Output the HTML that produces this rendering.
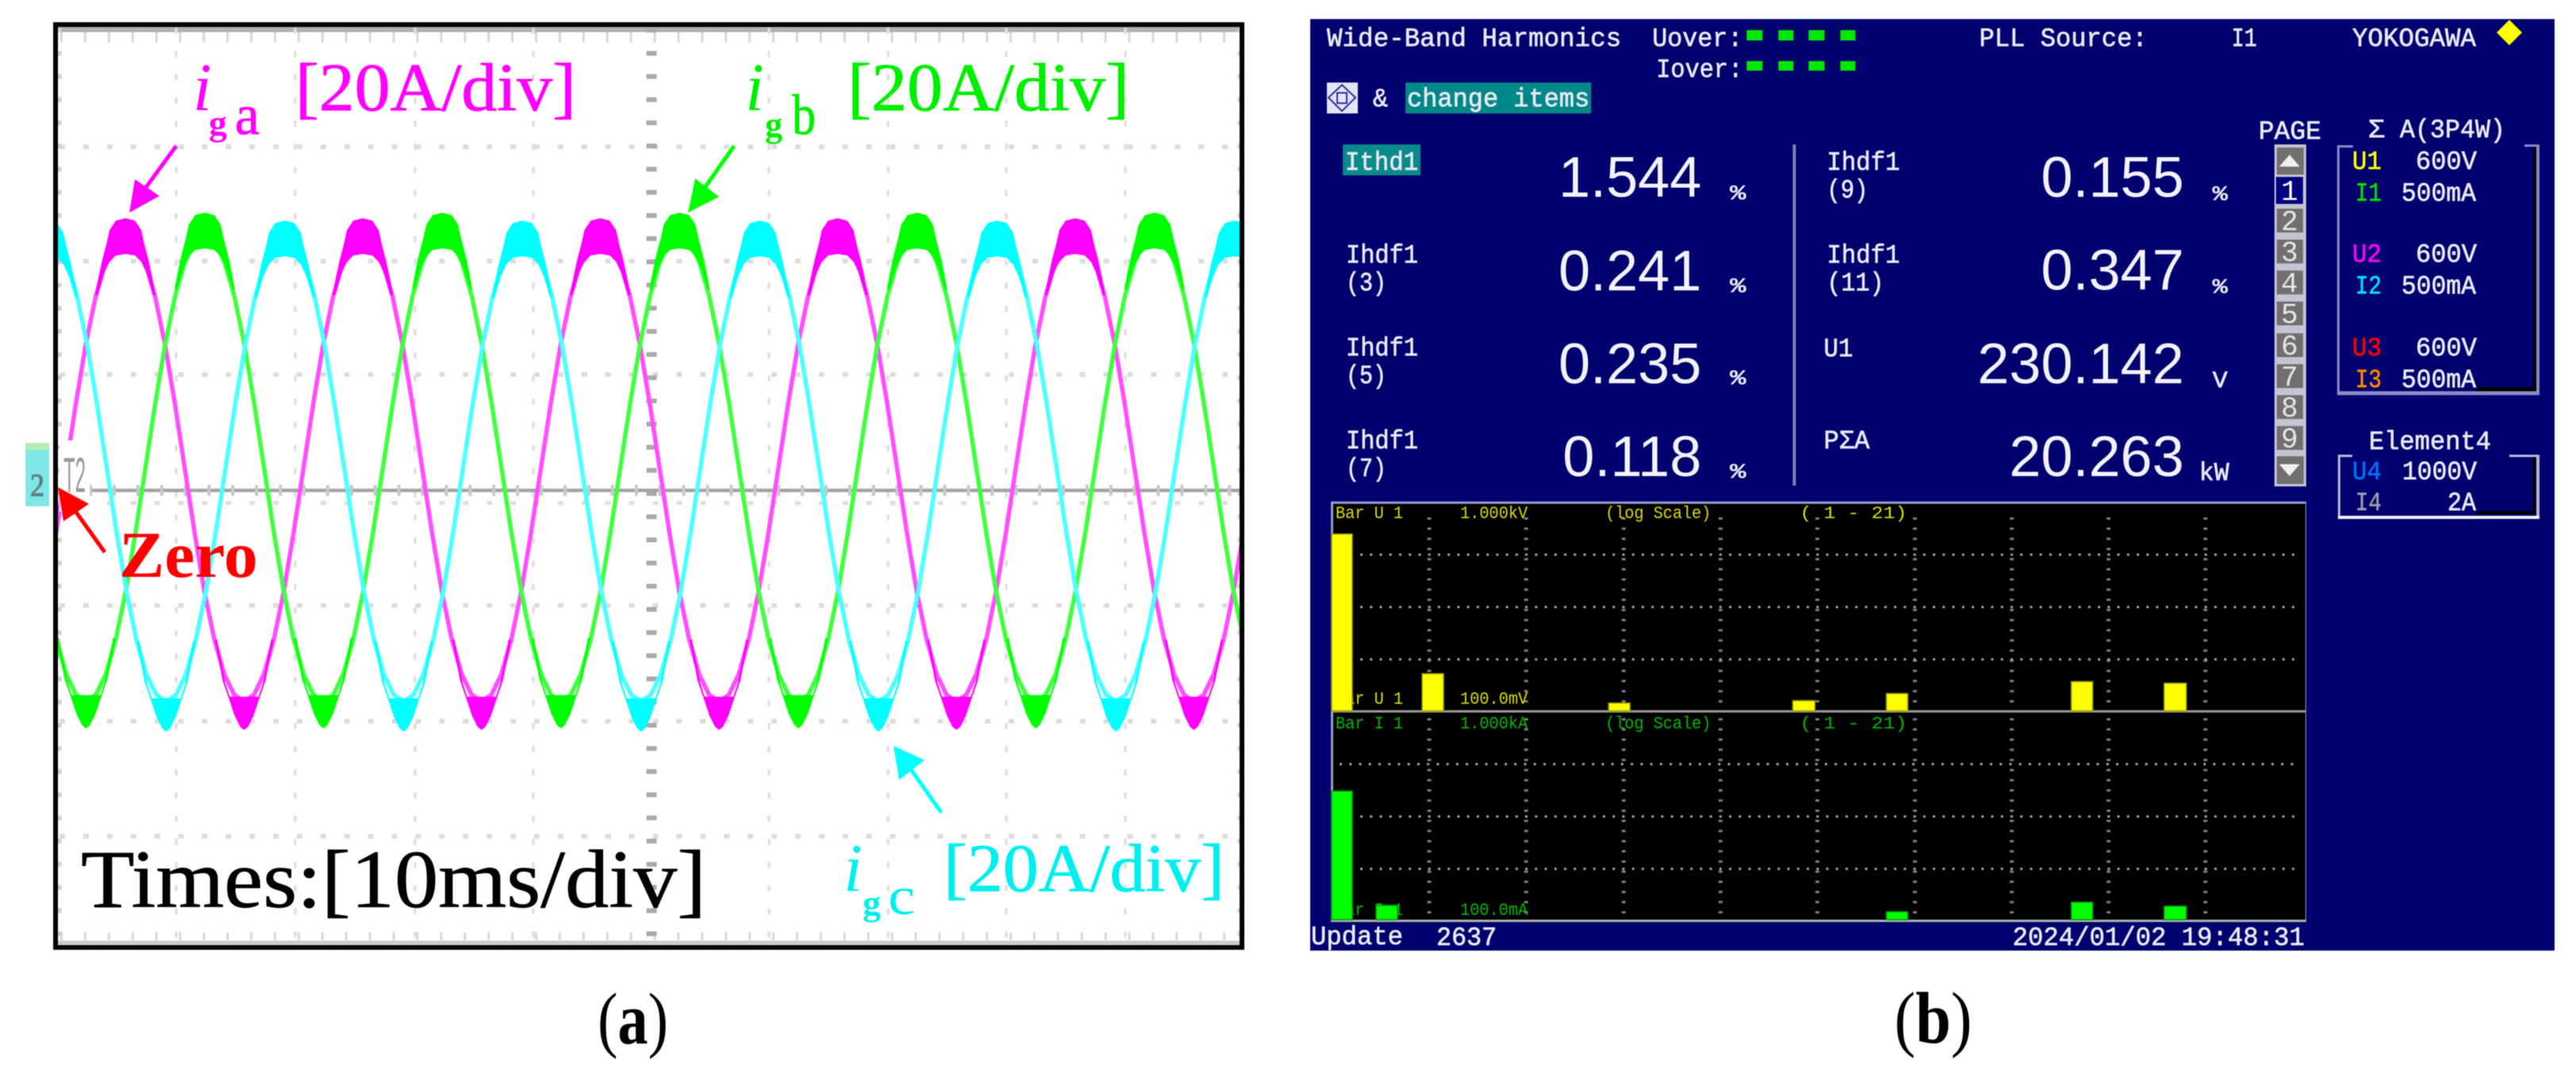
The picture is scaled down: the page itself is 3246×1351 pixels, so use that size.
<!DOCTYPE html>
<html>
<head>
<meta charset="utf-8">
<title>Waveform and harmonics</title>
<style>
html,body{margin:0;padding:0;background:#fff;}
svg{display:block;filter:blur(.6px);}
.s{font-family:"Liberation Serif",serif;}
.m{font-family:"Liberation Mono",monospace;fill:#e8e8f2;font-size:33px;stroke:#e8e8f2;stroke-width:.7px;}
.b{font-family:"Liberation Sans",sans-serif;fill:#f2f2f8;font-size:72px;text-anchor:end;}
.t{font-family:"Liberation Mono",monospace;font-size:22px;}
</style>
</head>
<body>
<svg xmlns="http://www.w3.org/2000/svg" width="3246" height="1351" viewBox="0 0 3246 1351">
<defs>
<polyline id="w" fill="none" stroke-linejoin="round" points="-149.6,884 -137.1,875.5 -124.7,849.8 -112.2,806.4 -99.7,746 -87.3,671.9 -74.8,590 -62.3,508.1 -49.9,434 -37.4,373.6 -24.9,330.2 -12.5,304.5 0,296 12.5,304.5 24.9,330.2 37.4,373.6 49.9,434 62.3,508.1 74.8,590 87.3,671.9 99.7,746 112.2,806.4 124.7,849.8 137.1,875.5 149.6,884"/>
<polygon id="up" points="-38,97 -34,75 -29,52 -24,33 -20,15 -12,3 0,0 12,3 20,15 24,33 29,52 34,75 38,97 35,97 27,70 20,55 12,47 0,45 -12,47 -20,55 -27,70 -35,97"/>
<polygon id="dn" points="-37,-114 -27,-62 -20,-42 -12,-18 -5,-4 0,0 5,-4 12,-18 20,-42 27,-62 37,-114 34,-114 24,-60 18,-42 -18,-42 -24,-60 -34,-114"/>
<clipPath id="plot"><rect x="73" y="33" width="1489" height="1158"/></clipPath>
</defs>

<rect width="3246" height="1351" fill="#fff"/>

<!-- PANEL A: grid -->
<g fill="none">
<line x1="73" y1="37" x2="1562" y2="37" stroke="#b0b0b0" stroke-width="7"/>
<line x1="76" y1="47" x2="1562" y2="47" stroke="#d8d8d8" stroke-width="13" stroke-dasharray="3 26.9"/>
<line x1="73" y1="1188" x2="1562" y2="1188" stroke="#ccc" stroke-width="5"/>
<line x1="76" y1="1180" x2="1562" y2="1180" stroke="#d8d8d8" stroke-width="10" stroke-dasharray="3 26.9"/>
<g stroke="#dcdcdc" stroke-width="6" stroke-dasharray="7 22.9">
<line x1="75" y1="185" x2="1562" y2="185"/>
<line x1="75" y1="329" x2="1562" y2="329"/>
<line x1="75" y1="472" x2="1562" y2="472"/>
<line x1="75" y1="763" x2="1562" y2="763"/>
<line x1="75" y1="909" x2="1562" y2="909"/>
<line x1="75" y1="1054" x2="1562" y2="1054"/>
</g>
<line x1="75" y1="634" x2="1562" y2="634" stroke="#dedede" stroke-width="5" stroke-dasharray="7 22.9"/>
<g stroke="#e0e0e0" stroke-width="3.5" stroke-dasharray="8 21.2">
<line x1="222" y1="35" x2="222" y2="1190"/>
<line x1="372" y1="35" x2="372" y2="1190"/>
<line x1="523" y1="35" x2="523" y2="1190"/>
<line x1="672" y1="35" x2="672" y2="1190"/>
<line x1="969" y1="35" x2="969" y2="1190"/>
<line x1="1119" y1="35" x2="1119" y2="1190"/>
<line x1="1268" y1="35" x2="1268" y2="1190"/>
<line x1="1418" y1="35" x2="1418" y2="1190"/>
</g>
<line x1="75" y1="35" x2="75" y2="1190" stroke="#d0d0d0" stroke-width="5" stroke-dasharray="6 23.2"/>
<line x1="1562" y1="35" x2="1562" y2="1190" stroke="#d0d0d0" stroke-width="5" stroke-dasharray="6 23.2"/>
<line x1="821" y1="35" x2="821" y2="1190" stroke="#aaa" stroke-width="13" stroke-dasharray="6 23.2"/>
<line x1="112" y1="618" x2="1562" y2="618" stroke="#a4a4a4" stroke-width="4.5"/>
<line x1="112" y1="618" x2="1562" y2="618" stroke="#c8c8c8" stroke-width="14" stroke-dasharray="4 25.9"/>
</g>

<!-- PANEL A: waves -->
<g clip-path="url(#plot)">
<g stroke="#ff4dff" stroke-width="5.5" fill="none">
<use href="#w" x="158"/><use href="#w" x="457.2"/><use href="#w" x="756.4"/><use href="#w" x="1055.6"/><use href="#w" x="1354.8"/><use href="#w" x="1654"/>
</g>
<g fill="#ff00ff">
<use href="#up" x="158" y="275"/><use href="#up" x="457.2" y="275"/><use href="#up" x="756.4" y="275"/><use href="#up" x="1055.6" y="275"/><use href="#up" x="1354.8" y="275"/>
<use href="#dn" x="307.6" y="920"/><use href="#dn" x="606.8" y="920"/><use href="#dn" x="906" y="920"/><use href="#dn" x="1205.2" y="920"/><use href="#dn" x="1504.4" y="920"/>
</g>
<rect x="75" y="555" width="38" height="90" fill="#fff"/>
<g stroke="#40ff40" stroke-width="5.5" fill="none">
<use href="#w" x="-41.2"/><use href="#w" x="258"/><use href="#w" x="557.2"/><use href="#w" x="856.4"/><use href="#w" x="1155.6"/><use href="#w" x="1454.8"/>
</g>
<g fill="#00ff00">
<use href="#up" x="258" y="268"/><use href="#up" x="557.2" y="268"/><use href="#up" x="856.4" y="268"/><use href="#up" x="1155.6" y="268"/><use href="#up" x="1454.8" y="268"/>
<use href="#dn" x="108.4" y="918"/><use href="#dn" x="407.6" y="918"/><use href="#dn" x="706.8" y="918"/><use href="#dn" x="1006" y="918"/><use href="#dn" x="1305.2" y="918"/>
</g>
<g stroke="#4dffff" stroke-width="5.5" fill="none">
<use href="#w" x="59.8"/><use href="#w" x="359"/><use href="#w" x="658.2"/><use href="#w" x="957.4"/><use href="#w" x="1256.6"/><use href="#w" x="1555.8"/>
</g>
<g fill="#00ffff">
<use href="#up" x="59.8" y="278"/><use href="#up" x="359" y="278"/><use href="#up" x="658.2" y="278"/><use href="#up" x="957.4" y="278"/><use href="#up" x="1256.6" y="278"/><use href="#up" x="1555.8" y="278"/>
<use href="#dn" x="209.4" y="922"/><use href="#dn" x="508.6" y="922"/><use href="#dn" x="807.8" y="922"/><use href="#dn" x="1107" y="922"/><use href="#dn" x="1406.2" y="922"/>
</g>
</g>

<!-- Left marker -->
<rect x="32" y="558" width="30" height="80" fill="#7fe6e6"/>
<rect x="32" y="558" width="30" height="9" fill="#b4eeb4"/>
<text class="s" x="38" y="625" font-size="40" fill="#5f7f7f" stroke="#5f7f7f" stroke-width="1" textLength="18" lengthAdjust="spacingAndGlyphs">2</text>
<text x="80" y="620" font-family="Liberation Sans, sans-serif" font-size="62" fill="#999" textLength="28" lengthAdjust="spacingAndGlyphs">T2</text>

<!-- Frame -->
<g fill="#000">
<rect x="67" y="28" width="1501" height="6"/>
<rect x="67" y="1191" width="1501" height="6"/>
<rect x="67" y="28" width="6" height="1169"/>
<rect x="1562" y="28" width="6" height="1169"/>
</g>

<!-- Arrows -->
<g stroke-width="5" fill="none">
<line x1="222" y1="184" x2="181" y2="240" stroke="#ff00ff"/>
<line x1="925" y1="184" x2="887" y2="238" stroke="#00ff00"/>
<line x1="1186" y1="1024" x2="1146" y2="967" stroke="#00ffff"/>
<line x1="132" y1="696" x2="92" y2="640" stroke="#ff0000"/>
</g>
<polygon points="163,268 170,226 201,247" fill="#ff00ff"/>
<polygon points="867,268 876,225 906,248" fill="#00ff00"/>
<polygon points="1126,940 1165,958 1133,983" fill="#00ffff"/>
<polygon points="73,614 112,635 80,657" fill="#ff0000"/>

<!-- Panel A labels -->
<g class="s">
<text x="243" y="139" font-size="86" font-style="italic" fill="#ff00ff">i</text>
<text x="263" y="170" font-size="44" font-weight="bold" fill="#ff00ff" textLength="23" lengthAdjust="spacingAndGlyphs">g</text>
<text x="296" y="169" font-size="72" fill="#ff00ff" stroke="#ff00ff" stroke-width=".8" textLength="31" lengthAdjust="spacingAndGlyphs">a</text>
<text x="372" y="139" font-size="86" fill="#ff00ff" stroke="#ff00ff" stroke-width=".8" textLength="354" lengthAdjust="spacingAndGlyphs">[20A/div]</text>

<text x="939" y="139" font-size="86" font-style="italic" fill="#00ee00">i</text>
<text x="964" y="172" font-size="44" font-weight="bold" fill="#00ee00" textLength="22" lengthAdjust="spacingAndGlyphs">g</text>
<text x="998" y="169" font-size="72" fill="#00ee00" stroke="#00ee00" stroke-width=".8" textLength="30" lengthAdjust="spacingAndGlyphs">b</text>
<text x="1068" y="139" font-size="86" fill="#00ee00" stroke="#00ee00" stroke-width=".8" textLength="355" lengthAdjust="spacingAndGlyphs">[20A/div]</text>

<text x="1063" y="1123" font-size="86" font-style="italic" fill="#00eeee">i</text>
<text x="1087" y="1153" font-size="44" font-weight="bold" fill="#00eeee" textLength="23" lengthAdjust="spacingAndGlyphs">g</text>
<text x="1119" y="1152" font-size="68" fill="#00eeee" textLength="34" lengthAdjust="spacingAndGlyphs">c</text>
<text x="1189" y="1123" font-size="86" fill="#00eeee" stroke="#00eeee" stroke-width=".8" textLength="354" lengthAdjust="spacingAndGlyphs">[20A/div]</text>

<text x="102" y="1143" font-size="104" fill="#000" stroke="#000" stroke-width=".7" textLength="788" lengthAdjust="spacingAndGlyphs">Times:[10ms/div]</text>
<text x="150" y="727" font-size="83" font-weight="bold" fill="#ff0000" textLength="175" lengthAdjust="spacingAndGlyphs">Zero</text>

<text x="753" y="1315" font-size="92" fill="#000" textLength="89" lengthAdjust="spacingAndGlyphs">(<tspan font-weight="bold">a</tspan>)</text>
<text x="2387" y="1314" font-size="92" fill="#000" textLength="98" lengthAdjust="spacingAndGlyphs">(<tspan font-weight="bold">b</tspan>)</text>
</g>

<!-- PANEL B -->
<rect x="1651" y="24" width="1568" height="1174" fill="#00006e"/>

<text class="m" x="1672" y="58" textLength="371" lengthAdjust="spacingAndGlyphs">Wide-Band Harmonics</text>
<text class="m" x="2082" y="58" textLength="114" lengthAdjust="spacingAndGlyphs">Uover:</text>
<text class="m" x="2087" y="97" textLength="109" lengthAdjust="spacingAndGlyphs">Iover:</text>
<g fill="#00e800">
<rect x="2201" y="38" width="20" height="13"/><rect x="2241" y="38" width="19" height="13"/><rect x="2279" y="38" width="20" height="13"/><rect x="2319" y="38" width="19" height="13"/>
<rect x="2201" y="77" width="20" height="12"/><rect x="2241" y="77" width="19" height="12"/><rect x="2279" y="77" width="20" height="12"/><rect x="2319" y="77" width="19" height="12"/>
</g>
<text class="m" x="2494" y="58" textLength="212" lengthAdjust="spacingAndGlyphs">PLL Source:</text>
<text class="m" x="2812" y="58" textLength="32" lengthAdjust="spacingAndGlyphs">I1</text>
<text class="m" x="2964" y="58" textLength="156" lengthAdjust="spacingAndGlyphs">YOKOGAWA</text>
<polygon points="3162,25 3178,41 3162,57 3146,41" fill="#ffff00"/>

<rect x="1672" y="104" width="39" height="39" fill="#e4e4f4"/>
<polygon points="1691,107 1708,123 1691,140 1674,123" fill="none" stroke="#30309a" stroke-width="2"/>
<rect x="1685" y="117" width="12" height="13" fill="none" stroke="#30309a" stroke-width="2"/>
<text class="m" x="1730" y="134" textLength="19" lengthAdjust="spacingAndGlyphs">&amp;</text>
<rect x="1771" y="104" width="234" height="39" fill="#008888"/>
<text class="m" x="1773" y="134" textLength="230" lengthAdjust="spacingAndGlyphs">change items</text>

<rect x="1692" y="182" width="98" height="39" fill="#0a8a8a"/>
<text class="m" x="1695" y="214" textLength="92" lengthAdjust="spacingAndGlyphs">Ithd1</text>
<text class="m" x="1696" y="331" textLength="91" lengthAdjust="spacingAndGlyphs">Ihdf1</text>
<text class="m" x="1696" y="366" textLength="51" lengthAdjust="spacingAndGlyphs">(3)</text>
<text class="m" x="1696" y="448" textLength="91" lengthAdjust="spacingAndGlyphs">Ihdf1</text>
<text class="m" x="1696" y="483" textLength="51" lengthAdjust="spacingAndGlyphs">(5)</text>
<text class="m" x="1696" y="565" textLength="91" lengthAdjust="spacingAndGlyphs">Ihdf1</text>
<text class="m" x="1696" y="600" textLength="51" lengthAdjust="spacingAndGlyphs">(7)</text>

<text class="b" x="2144" y="248">1.544</text>
<text class="b" x="2144" y="366">0.241</text>
<text class="b" x="2144" y="483">0.235</text>
<text class="b" x="2144" y="600">0.118</text>

<g class="m">
<text x="2180" y="251" font-size="26" textLength="20" lengthAdjust="spacingAndGlyphs">%</text>
<text x="2180" y="368" font-size="26" textLength="20" lengthAdjust="spacingAndGlyphs">%</text>
<text x="2180" y="484" font-size="26" textLength="20" lengthAdjust="spacingAndGlyphs">%</text>
<text x="2180" y="602" font-size="26" textLength="20" lengthAdjust="spacingAndGlyphs">%</text>
</g>

<rect x="2259" y="182" width="4" height="430" fill="#7f7fb8"/>

<text class="m" x="2302" y="214" textLength="92" lengthAdjust="spacingAndGlyphs">Ihdf1</text>
<text class="m" x="2302" y="249" textLength="52" lengthAdjust="spacingAndGlyphs">(9)</text>
<text class="m" x="2302" y="331" textLength="92" lengthAdjust="spacingAndGlyphs">Ihdf1</text>
<text class="m" x="2302" y="366" textLength="72" lengthAdjust="spacingAndGlyphs">(11)</text>
<text class="m" x="2298" y="449" textLength="37" lengthAdjust="spacingAndGlyphs">U1</text>
<text class="m" x="2298" y="565" textLength="58" lengthAdjust="spacingAndGlyphs">PΣA</text>

<text class="b" x="2752" y="248">0.155</text>
<text class="b" x="2752" y="365">0.347</text>
<text class="b" x="2752" y="483">230.142</text>
<text class="b" x="2752" y="600">20.263</text>

<g class="m">
<text x="2788" y="252" font-size="26" textLength="19" lengthAdjust="spacingAndGlyphs">%</text>
<text x="2788" y="369" font-size="26" textLength="19" lengthAdjust="spacingAndGlyphs">%</text>
<text x="2788" y="488" font-size="30" textLength="19" lengthAdjust="spacingAndGlyphs">V</text>
<text x="2771" y="605" font-size="32" textLength="38" lengthAdjust="spacingAndGlyphs">kW</text>
</g>

<text class="m" x="2846" y="175" textLength="79" lengthAdjust="spacingAndGlyphs">PAGE</text>

<!-- Page scrollbar -->
<rect x="2866" y="182" width="40" height="431" fill="#c4c4d2"/>
<rect x="2869" y="186" width="34" height="34" fill="#707070"/>
<polygon points="2885,195 2898,210 2872,210" fill="#f0f0f0"/>
<rect x="2868" y="223" width="34" height="34" fill="#000080"/>
<g fill="#707070">
<rect x="2869" y="263" width="33" height="30"/>
<rect x="2869" y="302" width="33" height="30"/>
<rect x="2869" y="341" width="33" height="30"/>
<rect x="2869" y="380" width="33" height="30"/>
<rect x="2869" y="420" width="33" height="30"/>
<rect x="2869" y="459" width="33" height="30"/>
<rect x="2869" y="498" width="33" height="30"/>
<rect x="2869" y="537" width="33" height="30"/>
</g>
<rect x="2869" y="575" width="34" height="35" fill="#707070"/>
<polygon points="2872,585 2898,585 2885,600" fill="#f0f0f0"/>
<g font-family="Liberation Mono, monospace" font-size="36" fill="#e6e6e6" text-anchor="middle">
<text x="2885" y="252" fill="#fff">1</text>
<text x="2885" y="290">2</text>
<text x="2885" y="329">3</text>
<text x="2885" y="368">4</text>
<text x="2885" y="407">5</text>
<text x="2885" y="447">6</text>
<text x="2885" y="486">7</text>
<text x="2885" y="525">8</text>
<text x="2885" y="564">9</text>
</g>

<!-- Legend 1 -->
<text class="m" x="2984" y="173" textLength="21" lengthAdjust="spacingAndGlyphs">Σ</text>
<text class="m" x="3024" y="173" textLength="133" lengthAdjust="spacingAndGlyphs">A(3P4W)</text>
<g fill="#8a8ac4">
<rect x="2945" y="183" width="20" height="3"/>
<rect x="2945" y="183" width="3" height="315"/>
<rect x="2945" y="493" width="255" height="5"/>
<rect x="3181" y="182" width="19" height="3"/>
<rect x="3196" y="182" width="4" height="316"/>
</g>
<rect x="3192" y="185" width="4" height="306" fill="#000"/>
<rect x="3121" y="488" width="75" height="5" fill="#000"/>
<g font-family="Liberation Mono, monospace" font-size="33">
<text x="2964" y="213" fill="#ffff00" stroke="#ffff00" stroke-width=".6" textLength="37" lengthAdjust="spacingAndGlyphs">U1</text>
<text x="2968" y="253" fill="#00e000" stroke="#00e000" stroke-width=".6" textLength="33" lengthAdjust="spacingAndGlyphs">I1</text>
<text x="2964" y="330" fill="#ff00ff" stroke="#ff00ff" stroke-width=".6" textLength="37" lengthAdjust="spacingAndGlyphs">U2</text>
<text x="2968" y="370" fill="#00e0ff" stroke="#00e0ff" stroke-width=".6" textLength="33" lengthAdjust="spacingAndGlyphs">I2</text>
<text x="2964" y="448" fill="#ff0000" stroke="#ff0000" stroke-width=".6" textLength="37" lengthAdjust="spacingAndGlyphs">U3</text>
<text x="2968" y="488" fill="#ff8800" stroke="#ff8800" stroke-width=".6" textLength="33" lengthAdjust="spacingAndGlyphs">I3</text>
<text x="2964" y="604" fill="#0070ff" stroke="#0070ff" stroke-width=".6" textLength="37" lengthAdjust="spacingAndGlyphs">U4</text>
<text x="2968" y="643" fill="#9a9aa8" stroke="#9a9aa8" stroke-width=".6" textLength="33" lengthAdjust="spacingAndGlyphs">I4</text>
</g>
<text class="m" x="3044" y="213" textLength="77" lengthAdjust="spacingAndGlyphs">600V</text>
<text class="m" x="3026" y="253" textLength="94" lengthAdjust="spacingAndGlyphs">500mA</text>
<text class="m" x="3044" y="330" textLength="77" lengthAdjust="spacingAndGlyphs">600V</text>
<text class="m" x="3026" y="370" textLength="94" lengthAdjust="spacingAndGlyphs">500mA</text>
<text class="m" x="3044" y="448" textLength="77" lengthAdjust="spacingAndGlyphs">600V</text>
<text class="m" x="3026" y="488" textLength="94" lengthAdjust="spacingAndGlyphs">500mA</text>

<!-- Legend 2 -->
<text class="m" x="2985" y="566" textLength="154" lengthAdjust="spacingAndGlyphs">Element4</text>
<g fill="#b8b8dc">
<rect x="2946" y="573" width="18" height="3"/>
<rect x="2946" y="573" width="3" height="81"/>
<rect x="3162" y="573" width="38" height="3"/>
<rect x="3196" y="573" width="4" height="81"/>
</g>
<rect x="2946" y="650" width="254" height="4" fill="#f0f0f8"/>
<rect x="3192" y="576" width="4" height="72" fill="#000"/>
<rect x="3121" y="644" width="75" height="4" fill="#000"/>
<text class="m" x="3027" y="604" textLength="94" lengthAdjust="spacingAndGlyphs">1000V</text>
<text class="m" x="3084" y="643" textLength="36" lengthAdjust="spacingAndGlyphs">2A</text>

<!-- Charts -->
<rect x="1677" y="632" width="1229" height="530" fill="#9a9ac4"/>
<rect x="1680" y="635" width="1225" height="525" fill="#000"/>
<rect x="1680" y="895" width="1225" height="3" fill="#9a9a9a"/>
<rect x="1677" y="1159" width="1229" height="3" fill="#b0b0b0"/>
<g fill="none" stroke="#7a7a7a">
<g stroke-width="5" stroke-dasharray="3 9.8">
<line x1="1801" y1="652" x2="1801" y2="895"/><line x1="1923" y1="652" x2="1923" y2="895"/><line x1="2046" y1="652" x2="2046" y2="895"/><line x1="2168" y1="652" x2="2168" y2="895"/><line x1="2290" y1="652" x2="2290" y2="895"/><line x1="2413" y1="652" x2="2413" y2="895"/><line x1="2535" y1="652" x2="2535" y2="895"/><line x1="2657" y1="652" x2="2657" y2="895"/><line x1="2779" y1="652" x2="2779" y2="895"/>
<line x1="1801" y1="905" x2="1801" y2="1155"/><line x1="1923" y1="905" x2="1923" y2="1155"/><line x1="2046" y1="905" x2="2046" y2="1155"/><line x1="2168" y1="905" x2="2168" y2="1155"/><line x1="2290" y1="905" x2="2290" y2="1155"/><line x1="2413" y1="905" x2="2413" y2="1155"/><line x1="2535" y1="905" x2="2535" y2="1155"/><line x1="2657" y1="905" x2="2657" y2="1155"/><line x1="2779" y1="905" x2="2779" y2="1155"/>
</g>
<g stroke-width="3" stroke-dasharray="3 9.23" stroke="#a0a0a0">
<line x1="1714" y1="699" x2="2894" y2="699"/><line x1="1714" y1="765" x2="2894" y2="765"/><line x1="1714" y1="831" x2="2894" y2="831"/>
<line x1="1688" y1="963" x2="2894" y2="963"/><line x1="1714" y1="1029" x2="2894" y2="1029"/><line x1="1714" y1="1095" x2="2894" y2="1095"/>
</g>
</g>
<g class="t" fill="#dcdc00">
<text x="1683" y="653" textLength="85" lengthAdjust="spacingAndGlyphs">Bar U 1</text>
<text x="1840" y="653" textLength="85" lengthAdjust="spacingAndGlyphs">1.000kV</text>
<text x="2023" y="653" textLength="133" lengthAdjust="spacingAndGlyphs">(log Scale)</text>
<text x="2268" y="653" textLength="135" lengthAdjust="spacingAndGlyphs">( 1 - 21)</text>
<text x="1683" y="887" textLength="85" lengthAdjust="spacingAndGlyphs">Bar U 1</text>
<text x="1840" y="887" textLength="85" lengthAdjust="spacingAndGlyphs">100.0mV</text>
</g>
<g class="t" fill="#00bb00">
<text x="1683" y="918" textLength="85" lengthAdjust="spacingAndGlyphs">Bar I 1</text>
<text x="1840" y="918" textLength="85" lengthAdjust="spacingAndGlyphs">1.000kA</text>
<text x="2023" y="918" textLength="133" lengthAdjust="spacingAndGlyphs">(log Scale)</text>
<text x="2268" y="918" textLength="135" lengthAdjust="spacingAndGlyphs">( 1 - 21)</text>
<text x="1683" y="1153" textLength="85" lengthAdjust="spacingAndGlyphs">Bar I 1</text>
<text x="1840" y="1153" textLength="85" lengthAdjust="spacingAndGlyphs">100.0mA</text>
</g>
<g fill="#ffff00" stroke="#999900" stroke-width="1.5">
<rect x="1678" y="673" width="26" height="223"/>
<rect x="1792" y="849" width="27" height="47"/>
<rect x="2027" y="886" width="27" height="10"/>
<rect x="2259" y="883" width="28" height="13"/>
<rect x="2377" y="874" width="27" height="22"/>
<rect x="2610" y="859" width="27" height="37"/>
<rect x="2727" y="861" width="28" height="35"/>
</g>
<g fill="#00ff00" stroke="#009900" stroke-width="1.5">
<rect x="1678" y="997" width="26" height="162"/>
<rect x="1734" y="1141" width="27" height="18"/>
<rect x="2377" y="1149" width="27" height="10"/>
<rect x="2610" y="1137" width="27" height="22"/>
<rect x="2727" y="1142" width="28" height="17"/>
</g>

<text class="m" x="1652" y="1190" textLength="116" lengthAdjust="spacingAndGlyphs">Update</text>
<text class="m" x="1810" y="1191" textLength="76" lengthAdjust="spacingAndGlyphs">2637</text>
<text class="m" x="2536" y="1191" textLength="368" lengthAdjust="spacingAndGlyphs">2024/01/02 19:48:31</text>
</svg>
</body>
</html>
